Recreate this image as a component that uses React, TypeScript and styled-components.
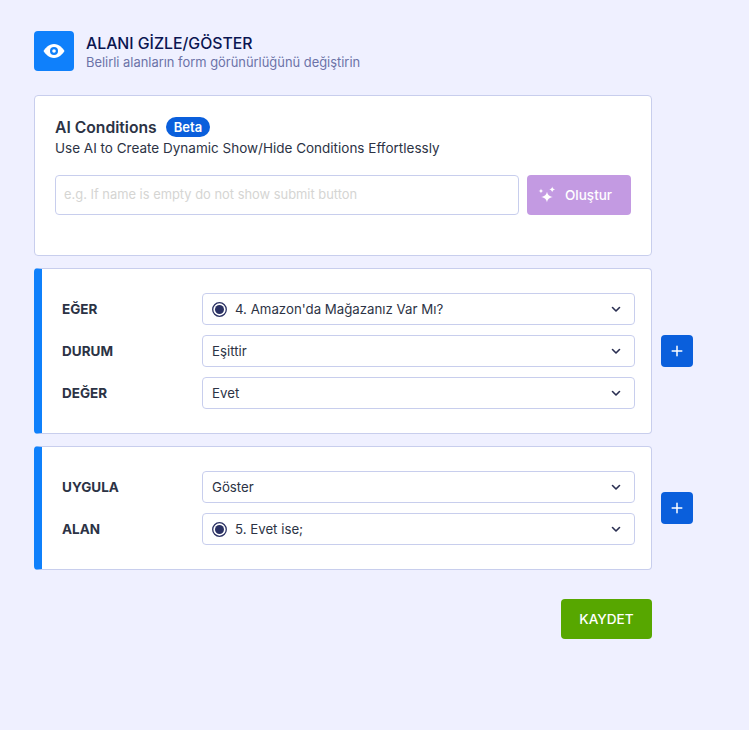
import { FC } from "react";
import styled, { createGlobalStyle } from "styled-components";

const GlobalStyle = createGlobalStyle`
  * { box-sizing: border-box; }
  html, body { margin: 0; min-height: 730px; background: #eff0ff; }
  body { font-family: Inter, "Noto Sans", sans-serif; }
`;

const Page = styled.div`
  padding: 31px 0 0 34px;
  width: 749px;
  height: 730px;
  background: #eff0ff;
`;

const Header = styled.header`
  display: flex;
  align-items: center;
  gap: 12px;
  height: 40px;
  margin-bottom: 24px;
`;

const IconTile = styled.div`
  width: 40px;
  height: 40px;
  border-radius: 4px;
  background: #0f80fb;
  display: flex;
  align-items: center;
  justify-content: center;
`;

const HeaderText = styled.div`
  padding-top: 3px;
`;

const HeaderTitle = styled.h1`
  margin: 0;
  font-size: 15.8px;
  line-height: 20px;
  font-weight: 500;
  color: #0a1551;
`;

const HeaderSub = styled.p`
  margin: 0;
  font-size: 12.9px;
  line-height: 18px;
  color: #6c73a8;
`;

const Row = styled.div`
  display: flex;
  align-items: center;
  gap: 9px;
  margin-bottom: 12px;
`;

const Card = styled.section<{ $accent?: boolean; $height: number }>`
  width: 618px;
  height: ${(p) => p.$height}px;
  background: #fff;
  border: 1px solid #c8ceed;
  border-radius: 4px;
  overflow: hidden;
  ${(p) => (p.$accent ? "border-left: 8px solid #0f80fb;" : "")}
`;

const AiCard = styled(Card)`
  padding: 21px 20px 0;
  margin-bottom: 12px;
`;

const AiTitleRow = styled.div`
  display: flex;
  align-items: center;
  gap: 9px;
  height: 20px;
`;

const AiTitle = styled.h2`
  margin: 0;
  font-size: 15.7px;
  font-weight: 600;
  color: #2c3345;
`;

const Badge = styled.span`
  background: #0a5fdc;
  color: #fff;
  font-size: 13px;
  font-weight: 600;
  line-height: 20px;
  height: 20px;
  padding: 0 8px;
  border-radius: 10px;
`;

const AiSub = styled.p`
  margin: 1px 0 0;
  font-size: 13.5px;
  line-height: 20px;
  color: #2c3345;
`;

const AiForm = styled.div`
  display: flex;
  gap: 8px;
  margin-top: 17px;
`;

const PromptInput = styled.input`
  width: 464px;
  height: 40px;
  border: 1px solid #c8ceed;
  border-radius: 4px;
  padding: 0 8px 2px;
  font: inherit;
  font-size: 12.9px;
  outline: none;
  &::placeholder { color: #d5d5d3; }
`;

const GenerateButton = styled.button`
  width: 104px;
  height: 40px;
  border: 0;
  border-radius: 4px;
  background: #c39ae2;
  color: #fff;
  font: inherit;
  font-size: 13.5px;
  font-weight: 500;
  display: flex;
  align-items: center;
  gap: 9px;
  padding: 0 0 0 11px;
`;

const Rows = styled.div`
  display: flex;
  flex-direction: column;
  gap: 10px;
  padding: 24px 16px 0 20px;
`;

const FieldRow = styled.div`
  display: flex;
  align-items: center;
  justify-content: space-between;
`;

const FieldLabel = styled.label`
  font-size: 13.5px;
  font-weight: 700;
  color: #2c3345;
`;

const SelectBox = styled.div`
  width: 433px;
  height: 32px;
  border: 1px solid #c8ceed;
  border-radius: 4px;
  padding: 0 13px 0 9px;
  display: flex;
  align-items: center;
  gap: 8px;
  font-size: 13.25px;
  color: #2c3345;
  background: #fff;
`;

const SelectText = styled.span`
  flex: 1;
`;

const AddButton = styled.button`
  width: 32px;
  height: 32px;
  border: 0;
  border-radius: 4px;
  background: #0a5fdc;
  padding: 0;
  display: flex;
  align-items: center;
  justify-content: center;
`;

const Footer = styled.div`
  width: 618px;
  display: flex;
  justify-content: flex-end;
  margin-top: 29px;
`;

const SaveButton = styled.button`
  width: 91px;
  height: 40px;
  border: 0;
  border-radius: 4px;
  background: #57a700;
  color: #fff;
  font: inherit;
  font-size: 13.6px;
  font-weight: 500;
`;

const Eye = () => (
  <svg width="24" height="24" viewBox="0 0 24 24">
    <path d="M12 5C6.800 5 3 9.400 1.500 12c1.500 2.600 5.300 7 10.500 7s9-4.400 10.500-7C21 9.400 17.200 5 12 5z" fill="#fff" />
    <circle cx="12" cy="12" r="4" fill="#0f80fb" />
    <circle cx="12" cy="12" r="1.800" fill="#fff" />
  </svg>
);

const Sparkles = () => (
  <svg width="18" height="20" viewBox="0 0 18 20" fill="#fff">
    <path d="M9 6.500c.7 3.300 2 4.800 6 5.500-4 .7-5.300 2.200-6 5.500-.7-3.300-2-4.800-6-5.500 4-.7 5.300-2.200 6-5.500z" />
    <path d="M14.200 1.500c.4 1.800 1 2.500 3 2.900-2 .4-2.600 1.100-3 2.900-.4-1.800-1-2.500-3-2.900 2-.4 2.600-1.100 3-2.900z" />
    <path d="M3 3.500c.3 1.500.8 2.100 2.600 2.500-1.800.4-2.300 1-2.600 2.500-.3-1.500-.8-2.100-2.600-2.500 1.800-.4 2.300-1 2.600-2.500z" />
  </svg>
);

const Chevron = () => (
  <svg width="10" height="7" viewBox="0 0 10 7" fill="none">
    <path d="M1.500 1.500 5 5l3.500-3.500" stroke="#2a2f52" strokeWidth="1.600" strokeLinecap="round" strokeLinejoin="round" />
  </svg>
);

const RadioMark = () => (
  <svg width="15" height="15" viewBox="0 0 15 15">
    <circle cx="7.500" cy="7.500" r="6.800" fill="#fff" stroke="#2a3163" strokeWidth="1.300" />
    <circle cx="7.500" cy="7.500" r="4.500" fill="#2a3163" />
  </svg>
);

const Plus = () => (
  <svg width="12" height="12" viewBox="0 0 12 12">
    <path d="M6 1.200v9.600M1.200 6h9.600" stroke="#fff" strokeWidth="1.500" strokeLinecap="round" />
  </svg>
);

const Field: FC<{ label: string; value: string; radio?: boolean }> = ({ label, value, radio }) => (
  <FieldRow>
    <FieldLabel>{label}</FieldLabel>
    <SelectBox>
      {radio && <RadioMark />}
      <SelectText>{value}</SelectText>
      <Chevron />
    </SelectBox>
  </FieldRow>
);

export default function App() {
  return (
    <Page>
      <GlobalStyle />
      <Header>
        <IconTile>
          <Eye />
        </IconTile>
        <HeaderText>
          <HeaderTitle>ALANI GİZLE/GÖSTER</HeaderTitle>
          <HeaderSub>Belirli alanların form görünürlüğünü değiştirin</HeaderSub>
        </HeaderText>
      </Header>

      <AiCard $height={161}>
        <AiTitleRow>
          <AiTitle>AI Conditions</AiTitle>
          <Badge>Beta</Badge>
        </AiTitleRow>
        <AiSub>Use AI to Create Dynamic Show/Hide Conditions Effortlessly</AiSub>
        <AiForm>
          <PromptInput placeholder="e.g. If name is empty do not show submit button" />
          <GenerateButton>
            <Sparkles />
            Oluştur
          </GenerateButton>
        </AiForm>
      </AiCard>

      <Row>
        <Card $accent $height={166}>
          <Rows>
            <Field label="EĞER" value="4. Amazon'da Mağazanız Var Mı?" radio />
            <Field label="DURUM" value="Eşittir" />
            <Field label="DEĞER" value="Evet" />
          </Rows>
        </Card>
        <AddButton aria-label="Ekle">
          <Plus />
        </AddButton>
      </Row>

      <Row>
        <Card $accent $height={124}>
          <Rows>
            <Field label="UYGULA" value="Göster" />
            <Field label="ALAN" value="5. Evet ise;" radio />
          </Rows>
        </Card>
        <AddButton aria-label="Ekle">
          <Plus />
        </AddButton>
      </Row>

      <Footer>
        <SaveButton>KAYDET</SaveButton>
      </Footer>
    </Page>
  );
}
